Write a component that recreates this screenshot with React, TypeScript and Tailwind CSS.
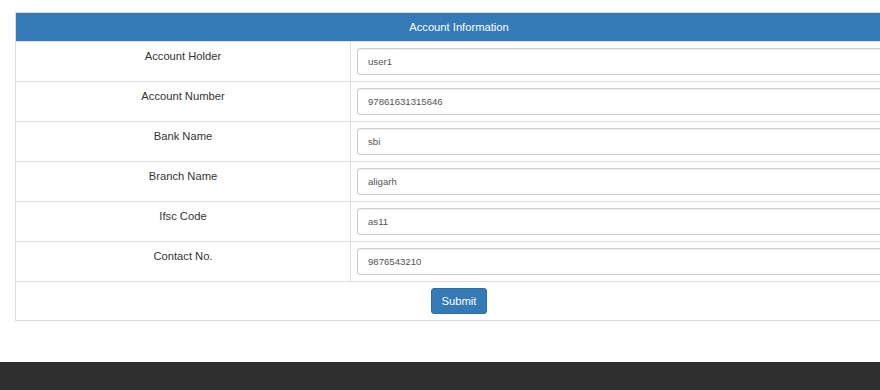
import React from 'react';

const fields = [
  { label: 'Account Holder', value: 'user1' },
  { label: 'Account Number', value: '97861631315646' },
  { label: 'Bank Name', value: 'sbi' },
  { label: 'Branch Name', value: 'aligarh' },
  { label: 'Ifsc Code', value: 'as11' },
  { label: 'Contact No.', value: '9876543210' },
];

export default function App() {
  return (
    <div
      className="w-full h-[390px] overflow-hidden bg-white flex flex-col"
      style={{ fontFamily: '"Liberation Sans", Arial, sans-serif' }}
    >
      {/* Page body */}
      <div className="pt-[12px] pl-[15px]">
        <div className="w-[888px] border border-[#ddd]">
          {/* Header */}
          <div className="h-[28px] bg-[#337ab7] text-white text-[11.2px] flex items-center justify-center">
            Account Information
          </div>

          {fields.map(f => (
            <div key={f.label} className="flex h-[40px] border-t border-[#ddd]">
              <div className="w-[335px] shrink-0 border-r border-[#ddd] text-center text-[11.2px] leading-[16px] pt-[6px] text-[#333]">
                {f.label}
              </div>
              <div className="flex-1 px-[6px] pt-[6px]">
                <input
                  type="text"
                  defaultValue={f.value}
                  className="w-full h-[27px] border border-[#ccc] rounded-[3px] px-[10px] text-[9.6px] text-[#555] outline-none shadow-[inset_0_1px_1px_rgba(0,0,0,0.075)]"
                  style={{ fontFamily: '"Liberation Sans", Arial, sans-serif' }}
                />
              </div>
            </div>
          ))}

          {/* Actions */}
          <div className="h-[39px] border-t border-[#ddd] flex justify-center pt-[6px]">
            <button
              type="submit"
              className="w-[56px] h-[26px] bg-[#337ab7] border border-[#2e6da4] rounded-[3px] text-white text-[11.2px]"
              style={{ fontFamily: '"Liberation Sans", Arial, sans-serif' }}
            >
              Submit
            </button>
          </div>
        </div>
      </div>

      {/* Footer */}
      <div className="mt-[41px] flex-1 bg-[#2f2f2f]" />
    </div>
  );
}
